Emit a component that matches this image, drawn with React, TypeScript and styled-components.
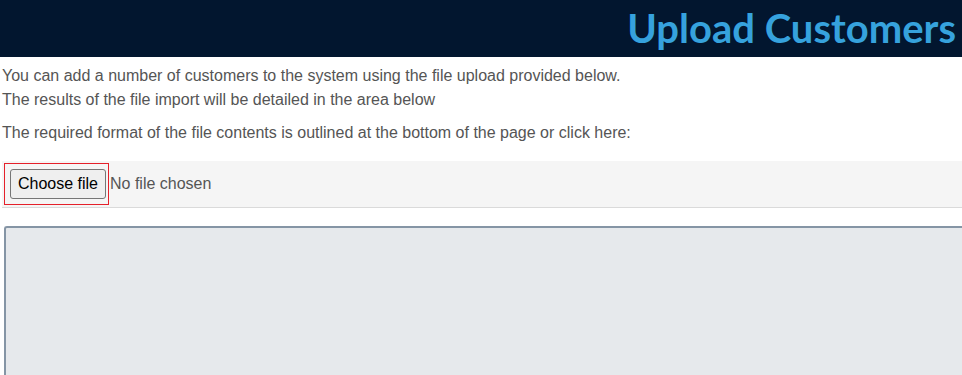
import React from "react";
import styled, { createGlobalStyle } from "styled-components";

const Global = createGlobalStyle`
  html, body { margin: 0; padding: 0; background: #fff; overflow: hidden; }
  body { font-family: Arial, "Liberation Sans", sans-serif; }
`;

const Header = styled.header`
  height: 57px;
  background: #02162f;
  display: flex;
  justify-content: flex-end;
  align-items: center;
  padding-right: 6px;
`;

const Title = styled.h1`
  margin: 0;
  font-family: Lato, sans-serif;
  font-weight: 700;
  font-size: 40px;
  line-height: 57px;
  color: #36a2dd;
`;

const Content = styled.main`
  padding-left: 2px;
`;

const Para = styled.p<{ $top: number }>`
  margin: ${(p) => p.$top}px 0 0;
  font-size: 16px;
  line-height: 24px;
  color: #555;
`;

const Bar = styled.div`
  margin-top: 16px;
  height: 46px;
  background: #f5f5f5;
  border-bottom: 1px solid #dadada;
  display: flex;
  align-items: center;
  gap: 1px;
  padding-left: 2px;
`;

const Outline = styled.div`
  border: 1px solid #e5202a;
  padding: 5px 2px 5px 5px;
  display: flex;
`;

const FileButton = styled.button`
  height: 30px;
  width: 96px;
  padding: 0;
  font-family: Arial, "Liberation Sans", sans-serif;
  font-size: 16px;
  color: #000;
  background: #efefef;
  border: 1px solid #767676;
  border-radius: 3px;
`;

const FileName = styled.span`
  font-size: 16px;
  color: #555;
`;

const Results = styled.div`
  margin: 18px 0 0 2px;
  height: 147px;
  background: #e6e9ec;
  border-top: 2px solid #8595a5;
  border-left: 2px solid #8595a5;
  border-top-left-radius: 3px;
`;

export default function App() {
  return (
    <>
      <Global />
      <Header>
        <Title>Upload Customers</Title>
      </Header>
      <Content>
        <Para $top={7}>
          You can add a number of customers to the system using the file upload provided below.
          <br />
          The results of the file import will be detailed in the area below
        </Para>
        <Para $top={9}>
          The required format of the file contents is outlined at the bottom of the page or click here:
        </Para>
        <Bar>
          <Outline>
            <FileButton type="button">Choose file</FileButton>
          </Outline>
          <FileName>No file chosen</FileName>
        </Bar>
        <Results />
      </Content>
    </>
  );
}
